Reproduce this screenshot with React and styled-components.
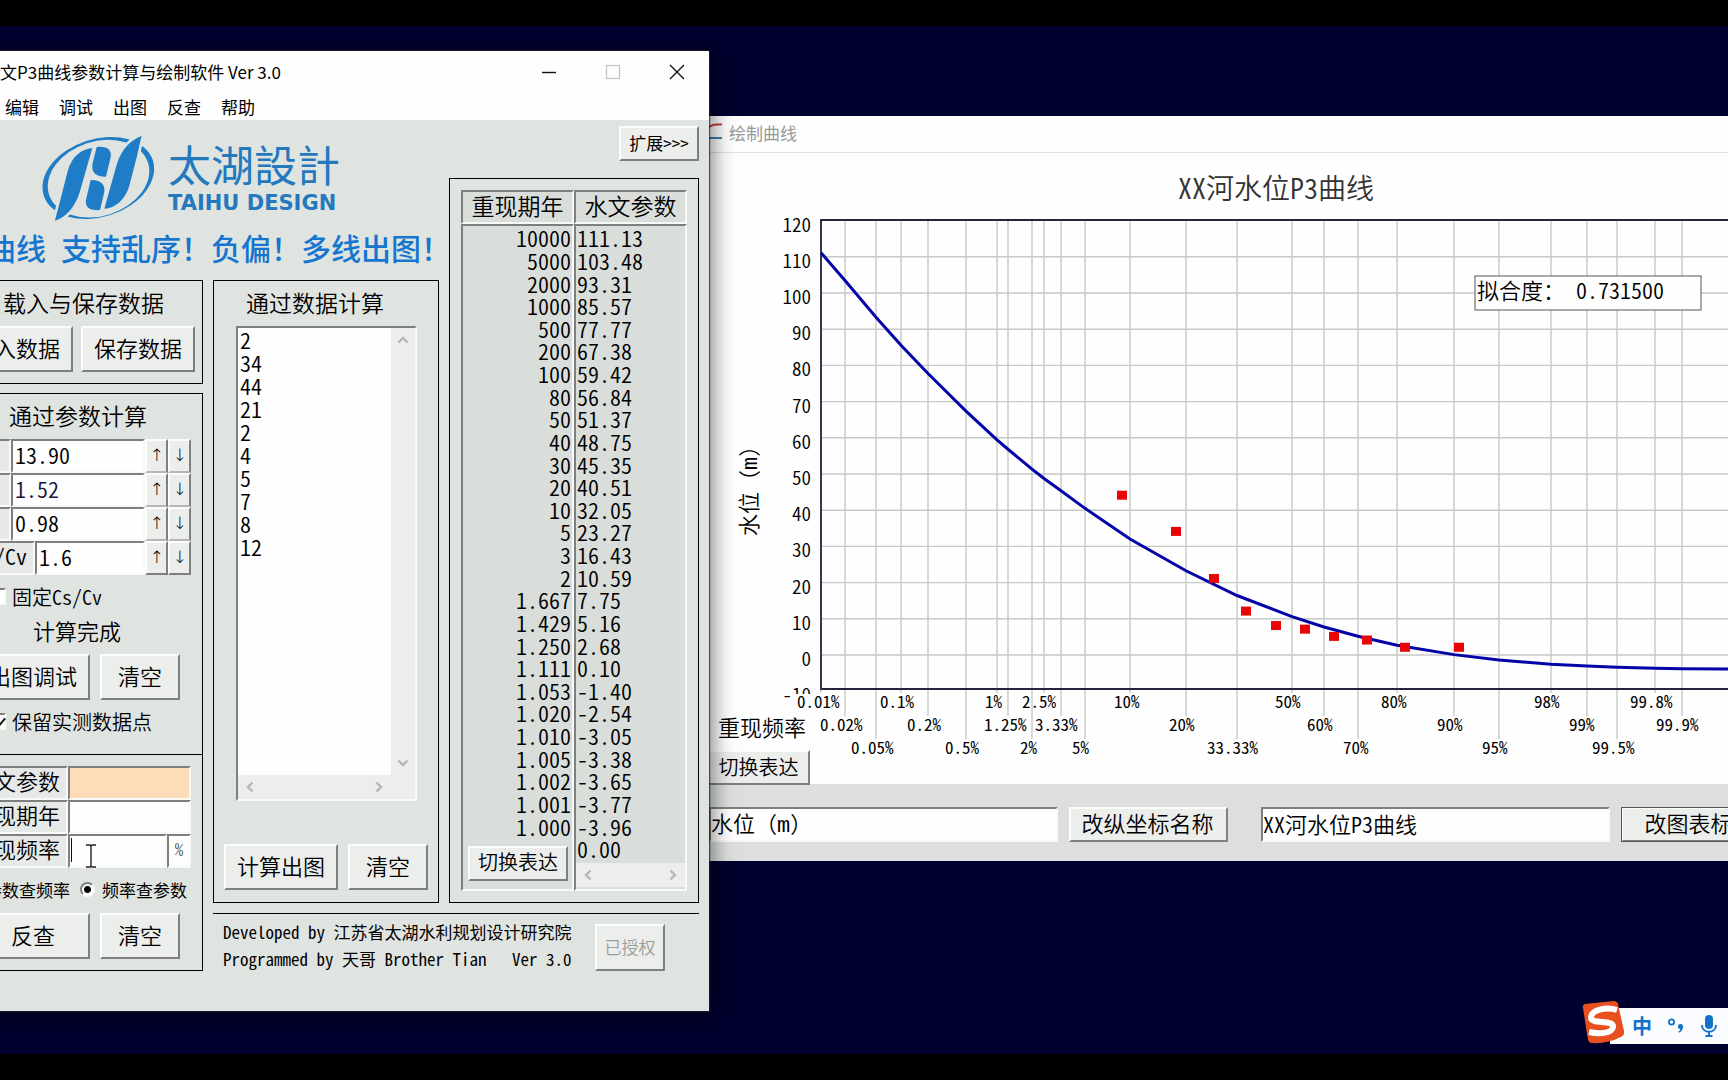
import React, { useState } from 'react';
import styled, { createGlobalStyle, css } from 'styled-components';

const returnPeriods = [
  ['10000', '111.13'], ['5000', '103.48'], ['2000', '93.31'], ['1000', '85.57'],
  ['500', '77.77'], ['200', '67.38'], ['100', '59.42'], ['80', '56.84'],
  ['50', '51.37'], ['40', '48.75'], ['30', '45.35'], ['20', '40.51'],
  ['10', '32.05'], ['5', '23.27'], ['3', '16.43'], ['2', '10.59'],
  ['1.667', '7.75'], ['1.429', '5.16'], ['1.250', '2.68'], ['1.111', '0.10'],
  ['1.053', '-1.40'], ['1.020', '-2.54'], ['1.010', '-3.05'], ['1.005', '-3.38'],
  ['1.002', '-3.65'], ['1.001', '-3.77'], ['1.000', '-3.96'],
];

// frequency label, x of the grid line, x of the label, label tier, curve value
const frequencies = [
  ['0.01%', 821, 797, 0, 111.13],
  ['0.02%', 845, 820, 1, 103.48],
  ['0.05%', 876, 851, 2, 93.31],
  ['0.1%', 901, 880, 0, 85.57],
  ['0.2%', 928, 907, 1, 77.77],
  ['0.5%', 966, 945, 2, 67.38],
  ['1%', 997, 985, 0, 59.42],
  ['1.25%', 1008, 984, 1, 56.84],
  ['2%', 1032, 1020, 2, 51.37],
  ['2.5%', 1044, 1022, 0, 48.75],
  ['3.33%', 1061, 1035, 1, 45.35],
  ['5%', 1085, 1072, 2, 40.51],
  ['10%', 1130, 1114, 0, 32.05],
  ['20%', 1186, 1169, 1, 23.27],
  ['33.33%', 1237, 1207, 2, 16.43],
  ['50%', 1292, 1275, 0, 10.59],
  ['60%', 1324, 1307, 1, 7.75],
  ['70%', 1358, 1343, 2, 5.16],
  ['80%', 1397, 1381, 0, 2.68],
  ['90%', 1454, 1437, 1, 0.1],
  ['95%', 1499, 1482, 2, -1.4],
  ['98%', 1551, 1534, 0, -2.54],
  ['99%', 1587, 1569, 1, -3.05],
  ['99.5%', 1617, 1592, 2, -3.38],
  ['99.8%', 1655, 1630, 0, -3.65],
  ['99.9%', 1682, 1656, 1, -3.77],
];

const measured = [
  [1122, 44], [1176, 34], [1214, 21], [1246, 12], [1276, 8],
  [1305, 7], [1334, 5], [1367, 4], [1405, 2], [1459, 2],
];

const yTicks = [120, 110, 100, 90, 80, 70, 60, 50, 40, 30, 20, 10, 0, -10];

const yOf = (value) => 655 - 3.62 * value;

const Chevron = ({ d }) => (
  <svg width="12" height="12" viewBox="0 0 12 12" fill="none" stroke="#b4b7b5" strokeWidth="2.4">
    <path d={d} />
  </svg>
);

const ScrollRow = () => (
  <HScroll>
    <Chevron d="M8.5 1.5 L4 6 L8.5 10.5" />
    <Chevron d="M3.5 1.5 L8 6 L3.5 10.5" />
  </HScroll>
);

const Logo = () => (
  <svg width="117" height="90" viewBox="120 280 351 270">
    <path
      fill="#1f7cc6"
      fillRule="evenodd"
      transform="rotate(-18 295 415)"
      d="M123 415 a172 117 0 1 0 344 0 a172 117 0 1 0 -344 0 Z M139 417 a156 112 0 1 0 312 0 a156 112 0 1 0 -312 0 Z"
    />
    <g fill="#1f7cc6" stroke="#e0e4e1" strokeWidth="16" paintOrder="stroke">
      <path d="M165 543 C168 530 175 505 180 485 L203 395 C215 350 245 328 277 325 L240 455 C225 505 195 535 165 543 Z" />
      <path d="M425 289 C421 302 417 325 412 345 L388 438 C375 482 345 505 313 507 L350 375 C365 325 395 300 425 289 Z" />
    </g>
    <g fill="#1f7cc6">
      <path d="M290 322 C320 318 336 330 332 352 L318 411 C290 412 274 400 277 375 Z" />
      <path d="M300 511 C270 514 254 502 258 480 L272 421 C300 420 316 432 313 457 Z" />
    </g>
  </svg>
);

const ParamRow = ({ label, wide, value, ink, last }) => {
  const [current, setCurrent] = useState(value);
  const step = (delta) => setCurrent((Number(current) + delta).toFixed(2));

  return (
    <Row>
      <CellLabel htmlFor={`param-${label}`} $edge={wide ? 84 : 60}>{wide ? label : ''}</CellLabel>
      <TextInput
        id={`param-${label}`}
        aria-label={label}
        value={current}
        $ink={ink}
        onChange={(e) => setCurrent(e.target.value)}
      />
      <Spin aria-label={`${label} +`} $last={last} onClick={() => step(0.01)}>↑</Spin>
      <Spin aria-label={`${label} -`} $last={last} onClick={() => step(-0.01)}>↓</Spin>
    </Row>
  );
};

const CurveChart = () => (
  <svg width="100%" viewBox="709 153 1079 631" preserveAspectRatio="xMinYMin meet">
    <g stroke="#c6c9c7" strokeWidth="1.4">
      {yTicks.slice(1, -1).map((t) => (
        <line key={t} x1="822" x2="1800" y1={yOf(t)} y2={yOf(t)} />
      ))}
      {frequencies.map(([label, x, , tier]) => (
        <line key={label} x1={x} x2={x} y1="221" y2={693 + tier * 23} />
      ))}
    </g>
    <path d="M1800 220 H821 V689 H1800" fill="none" stroke="#23253f" strokeWidth="1.8" />
    <polyline
      fill="none"
      stroke="#0404a8"
      strokeWidth="3"
      points={[...frequencies.map(([, x, , , v]) => `${x},${yOf(v)}`), `1790,${yOf(-3.96)}`].join(' ')}
    />
    {measured.map(([x, v]) => (
      <rect key={x} x={x - 5} y={yOf(v) - 5} width="10" height="9" fill="#ea0505" />
    ))}
    <ChartText $size={28} x="1178" y="199" fill="#333">XX河水位P3曲线</ChartText>
    {yTicks.map((t) => (
      <ChartText key={t} $size={19} x="811" y={yOf(t) + 11} textAnchor="end">{t}</ChartText>
    ))}
    <rect x="792" y="694" width="48" height="16" fill="#fdfefd" />
    {frequencies.map(([label, , x, tier]) => (
      <ChartText key={label} $size={17} $bold x={x} y={708 + tier * 23}>{label}</ChartText>
    ))}
    <ChartText $size={22} $fullWidth transform="translate(757 536) rotate(-90)">水位（m）</ChartText>
    <ChartText $size={22} x="718" y="736">重现频率</ChartText>
    <rect x="1475" y="276" width="226" height="34" fill="#fdfefd" stroke="#555" />
    <ChartText $size={22} x="1477" y="299">拟合度： 0.731500</ChartText>
  </svg>
);

const App = () => {
  const [samples, setSamples] = useState('2\n34\n44\n21\n2\n4\n5\n7\n8\n12');
  const [axisName, setAxisName] = useState('水位（m）');
  const [chartName, setChartName] = useState('XX河水位P3曲线');
  const [mode, setMode] = useState('frequency');

  return (
    <Screen>
      <GlobalStyle />
      <Desktop>
        <ChartWindow>
          <ChartTitleBar>
            <svg width="16" height="18" viewBox="0 0 16 18" fill="none" strokeWidth="2">
              <path d="M0 4 C3 2 5 1.500 8 1.500 H13" stroke="#cf3c3c" />
              <path d="M0 15 H13" stroke="#3b82ad" />
            </svg>
            绘制曲线
          </ChartTitleBar>
          <Plot>
            <CurveChart />
            <PlotToggle>切换表达</PlotToggle>
          </Plot>
          <NameBar>
            <NameInput $fullWidth aria-label="纵坐标名称" value={axisName} onChange={(e) => setAxisName(e.target.value)} />
            <NameButton>改纵坐标名称</NameButton>
            <NameInput $spaced aria-label="图表标题" value={chartName} onChange={(e) => setChartName(e.target.value)} />
            <NameButton $focused>改图表标题</NameButton>
          </NameBar>
        </ChartWindow>

        <MainWindow>
          <TitleBar>
            <Title>水文P3曲线参数计算与绘制软件 Ver 3.0</Title>
            <WindowButton aria-label="最小化">
              <svg width="16" height="16" viewBox="0 0 16 16" stroke="#111" strokeWidth="1.4"><path d="M1 8.500 H15" /></svg>
            </WindowButton>
            <WindowButton aria-label="最大化" disabled>
              <svg width="16" height="16" viewBox="0 0 16 16" fill="none" stroke="#c4c4c4" strokeWidth="1.2"><rect x="1.500" y="1.500" width="13" height="13" /></svg>
            </WindowButton>
            <WindowButton aria-label="关闭">
              <svg width="16" height="16" viewBox="0 0 16 16" stroke="#111" strokeWidth="1.4"><path d="M1 1 L15 15 M15 1 L1 15" /></svg>
            </WindowButton>
          </TitleBar>
          <MenuBar>
            {['编辑', '调试', '出图', '反查', '帮助'].map((item) => (
              <MenuItem key={item}>{item}</MenuItem>
            ))}
          </MenuBar>

          <Body>
            <Header>
              <Brand>
                <Logo />
                <BrandText>
                  <BrandName>太湖設計</BrandName>
                  <BrandLatin>TAIHU DESIGN</BrandLatin>
                </BrandText>
              </Brand>
              <Slogan>曲线 支持乱序！负偏！多线出图！</Slogan>
            </Header>

            <LeftColumn>
              <Panel>
                <PanelTitle $indent={52}>载入与保存数据</PanelTitle>
                <ButtonRow $gap={8} $end={7}>
                  <Button>载入数据</Button>
                  <Button>保存数据</Button>
                </ButtonRow>
              </Panel>

              <Panel $spaced>
                <PanelTitle $indent={58}>通过参数计算</PanelTitle>
                <ParamRow label="Ex" value="13.90" />
                <ParamRow label="Cv" value="1.52" ink="#14143c" />
                <ParamRow label="Cs" value="0.98" />
                <ParamRow label="Cs/Cv" value="1.6" wide last />
                <CheckLabel>
                  <Check type="checkbox" />
                  固定Cs/Cv
                </CheckLabel>
                <Status>计算完成</Status>
                <ButtonRow $gap={10} $end={22}>
                  <Button>出图调试</Button>
                  <Button $short>清空</Button>
                </ButtonRow>
                <CheckLabel>
                  <Check type="checkbox" defaultChecked />
                  保留实测数据点
                </CheckLabel>

                <Lookup>
                  <Row>
                    <CellLabel htmlFor="q-param" $edge={117}>水文参数</CellLabel>
                    <TextInput id="q-param" $fill="#fcdcb9" />
                  </Row>
                  <Row>
                    <CellLabel htmlFor="q-period" $edge={117}>重现期年</CellLabel>
                    <TextInput id="q-period" />
                  </Row>
                  <Row>
                    <CellLabel htmlFor="q-freq" $edge={117}>重现频率</CellLabel>
                    <TextInput id="q-freq" />
                    <Unit>%</Unit>
                    <Caret />
                    <Pointer width="12" height="24" viewBox="0 0 12 24" fill="none" stroke="#222" strokeWidth="1.4">
                      <path d="M1 1 H5 L6 2 L7 1 H11 M6 2 V22 M1 23 H5 L6 22 L7 23 H11" />
                    </Pointer>
                  </Row>
                </Lookup>
                <RadioRow>
                  <RadioLabel>
                    <Radio type="radio" name="mode" checked={mode === 'value'} onChange={() => setMode('value')} />
                    参数查频率
                  </RadioLabel>
                  <RadioLabel>
                    <Radio type="radio" name="mode" checked={mode === 'frequency'} onChange={() => setMode('frequency')} />
                    频率查参数
                  </RadioLabel>
                </RadioRow>
                <ButtonRow $gap={10} $end={22}>
                  <Button>反查</Button>
                  <Button $short>清空</Button>
                </ButtonRow>
              </Panel>
            </LeftColumn>

            <DataPanel>
              <PanelTitle $indent={32}>通过数据计算</PanelTitle>
              <Editor>
                <Samples
                  aria-label="通过数据计算"
                  spellCheck={false}
                  value={samples}
                  onChange={(e) => setSamples(e.target.value)}
                />
                <VScroll>
                  <Chevron d="M1.500 8.500 L6 4 L10.500 8.500" />
                  <Chevron d="M1.500 3.500 L6 8 L10.500 3.500" />
                </VScroll>
                <ScrollRow />
              </Editor>
              <ButtonRow $gap={10} $end={10}>
                <Button>计算出图</Button>
                <Button $short onClick={() => setSamples('')}>清空</Button>
              </ButtonRow>
            </DataPanel>

            <ResultColumn>
              <ExpandButton>扩展&gt;&gt;&gt;</ExpandButton>
              <ResultPanel>
                <Table>
                  <thead>
                    <tr>
                      <th>重现期年</th>
                      <th>水文参数</th>
                    </tr>
                  </thead>
                  <tbody>
                    {returnPeriods.map(([period, value]) => (
                      <tr key={period}>
                        <td>{period}</td>
                        <td>{value}</td>
                      </tr>
                    ))}
                  </tbody>
                  <tfoot>
                    <tr>
                      <td rowSpan={2}><ToggleButton>切换表达</ToggleButton></td>
                      <td>0.00</td>
                    </tr>
                    <tr>
                      <td><ScrollRow /></td>
                    </tr>
                  </tfoot>
                </Table>
              </ResultPanel>
            </ResultColumn>

            <Footer>
              <Credits>
                <p>Developed by 江苏省太湖水利规划设计研究院</p>
                <p>Programmed by 天哥 Brother Tian   Ver 3.0</p>
              </Credits>
              <LicenseButton disabled>已授权</LicenseButton>
            </Footer>
          </Body>
        </MainWindow>

        <ImeBar>
          <ImeLogo width="46" height="46" viewBox="0 0 46 46">
            <path d="M3 8 Q2 5 5 4 L34 1 Q37 1 38 4 L44 31 Q45 35 41 37 Q27 44 12 43 Q9 43 8 40 Z" fill="#e9501f" />
            <path d="M37 10 C27 7 12 9 11 17 C10 25 34 19 33 27 C32 34 18 34 9 32" fill="none" stroke="#fff" strokeWidth="6" />
          </ImeLogo>
          <span>中</span>
          <svg width="18" height="20" viewBox="0 0 18 20">
            <circle cx="4.500" cy="6" r="2.600" fill="none" stroke="#1372c8" strokeWidth="1.800" />
            <path d="M13.500 8 a2.500 2.500 0 0 1 2.500 2.700 c0 3 -1.500 5 -4 6 l-0.600 -1.200 c1.300 -0.700 2 -1.500 2 -2.500 a2.500 2.500 0 0 1 0.100 -5 Z" fill="#1372c8" />
          </svg>
          <svg width="18" height="24" viewBox="0 0 18 24">
            <rect x="5" y="1" width="8" height="14" rx="4" fill="#1372c8" />
            <path d="M2 11 C2 20 16 20 16 11 M9 18 V21 M5.500 22 H12.500" fill="none" stroke="#1372c8" strokeWidth="2" />
          </svg>
        </ImeBar>
      </Desktop>
    </Screen>
  );
};

export default App;

const GlobalStyle = createGlobalStyle`
  * {
    box-sizing: border-box;
  }
  body {
    margin: 0;
    background: #000;
    overflow: hidden;
  }
  body, button, input, textarea {
    color: #000;
    font-family: "Noto Sans CJK SC", sans-serif;
    font-weight: 350;
    font-feature-settings: "hwid";
  }
  svg {
    display: block;
    flex: none;
  }
`;

const raised = css`
  border: 2px solid;
  border-color: #fbfdfb #7d807e #7d807e #fbfdfb;
  background: #eceeec;
`;

const sunken = css`
  border: 2px solid;
  border-color: #7d807e #f8faf8 #f8faf8 #7d807e;
`;

const Screen = styled.div`
  display: flex;
  height: 100vh;
  padding: 26px 0;
  background: #000;
`;

const Desktop = styled.main`
  position: relative;
  flex: 1;
  overflow: hidden;
  background: #00002f;
`;

const MainWindow = styled.section`
  position: absolute;
  top: 25px;
  left: -60px;
  width: 769px;
  background: #e0e4e1;
  box-shadow: 0 0 1px 1px rgba(30, 32, 40, 0.7), 4px 4px 20px rgba(0, 0, 0, 0.5);
`;

const TitleBar = styled.header`
  display: flex;
  align-items: center;
  height: 42px;
  padding-left: 43px;
  background: #fdfefd;
`;

const Title = styled.h1`
  flex: 1;
  margin: 0;
  padding-bottom: 2px;
  font-size: 17px;
  font-weight: 400;
  font-feature-settings: normal;
`;

const WindowButton = styled.button`
  display: flex;
  align-items: center;
  justify-content: center;
  width: 64px;
  height: 42px;
  padding: 0;
  border: 0;
  background: none;
`;

const MenuBar = styled.nav`
  display: flex;
  gap: 20px;
  height: 27px;
  padding-left: 65px;
  background: #fdfefd;
`;

const MenuItem = styled.button`
  padding: 0;
  border: 0;
  background: none;
  font-size: 17px;
  line-height: 24px;
  font-weight: 400;
`;

const Body = styled.div`
  display: grid;
  grid-template-columns: 263px 226px 250px;
  grid-template-rows: 160px 623px auto;
  column-gap: 10px;
  padding: 0 10px 40px 0;
`;

const Header = styled.div`
  grid-column: 1 / 3;
  grid-row: 1;
  padding-top: 13px;
`;

const Brand = styled.div`
  display: flex;
  gap: 11px;
  padding-left: 100px;
`;

const BrandText = styled.div`
  color: #2479bd;
`;

const BrandName = styled.div`
  font-family: "Noto Sans CJK TC", sans-serif;
  font-size: 43px;
  line-height: 60px;
  font-weight: 400;
`;

const BrandLatin = styled.div`
  font-family: "DejaVu Sans", sans-serif;
  font-size: 21px;
  line-height: 20px;
  font-weight: 700;
`;

const Slogan = styled.div`
  padding-left: 46px;
  color: #1575cf;
  font-size: 30px;
  line-height: 48px;
  font-weight: 500;
  white-space: nowrap;
`;

const LeftColumn = styled.div`
  grid-column: 1;
  grid-row: 2 / 4;
  padding-left: 10px;
`;

const Panel = styled.section`
  margin-top: ${(props) => (props.$spaced ? '9px' : '0')};
  padding-bottom: 11px;
  border: 1px solid #000;
`;

const PanelTitle = styled.h2`
  margin: 0;
  padding-left: ${(props) => props.$indent}px;
  padding-bottom: 3px;
  font-size: 23px;
  line-height: 42px;
  font-weight: 350;
`;

const ButtonRow = styled.div`
  display: flex;
  justify-content: flex-end;
  gap: ${(props) => props.$gap}px;
  padding-right: ${(props) => props.$end}px;
`;

const Button = styled.button`
  ${raised}
  width: ${(props) => (props.$short ? '80px' : '114px')};
  height: 46px;
  padding: 0 0 4px;
  font-size: 22px;
  line-height: 30px;
  white-space: nowrap;
`;

const Row = styled.div`
  position: relative;
  display: flex;
  height: 34px;
  margin-right: 11px;
`;

const CellLabel = styled.label`
  ${sunken}
  width: ${(props) => props.$edge}px;
  padding-right: 6px;
  background: #e6e9e7;
  font-size: 22px;
  line-height: 24px;
  text-align: right;
  white-space: nowrap;
`;

const TextInput = styled.input`
  ${sunken}
  flex: 1;
  min-width: 0;
  padding: 0 2px 4px;
  border-radius: 0;
  background: ${(props) => props.$fill || '#fdfefd'};
  color: ${(props) => props.$ink || '#000'};
  font-size: 22px;
`;

const Spin = styled.button`
  ${raised}
  width: 23px;
  padding: 0 0 3px;
  border-bottom-color: ${(props) => (props.$last ? '#7d807e' : '#b4b7b5')};
  font-family: "DejaVu Sans", sans-serif;
  font-size: 17px;
  line-height: 24px;
`;

const CheckLabel = styled.label`
  display: flex;
  align-items: center;
  gap: 6px;
  height: 45px;
  padding: 0 0 2px 38px;
  font-size: 20px;
`;

const Check = styled.input`
  ${sunken}
  position: relative;
  width: 17px;
  height: 17px;
  margin: 0;
  appearance: none;
  background: #fff;
  &:checked::after {
    content: '';
    position: absolute;
    left: 4px;
    top: 0;
    width: 6px;
    height: 10px;
    border: solid #111;
    border-width: 0 2px 2px 0;
    transform: rotate(40deg);
  }
`;

const Status = styled.p`
  margin: 0;
  padding-left: 82px;
  padding-bottom: 14px;
  font-size: 22px;
  line-height: 20px;
`;

const Lookup = styled.div`
  margin-top: 9px;
  margin-bottom: 7px;
  padding-top: 11px;
  border-top: 1px solid #000;
`;

const Unit = styled.span`
  ${sunken}
  width: 24px;
  background: #fdfefd;
  color: #555;
  font-size: 17px;
  line-height: 26px;
  text-align: center;
`;

const Caret = styled.span`
  position: absolute;
  left: 120px;
  top: 4px;
  width: 1px;
  height: 24px;
  background: #111;
`;

const Pointer = styled.svg`
  position: absolute;
  left: 134px;
  top: 10px;
`;

const RadioRow = styled.div`
  display: flex;
  justify-content: flex-end;
  gap: 10px;
  height: 38px;
  padding-right: 15px;
`;

const RadioLabel = styled.label`
  display: flex;
  align-items: center;
  gap: 7px;
  height: 28px;
  font-size: 17px;
  font-weight: 400;
  white-space: nowrap;
`;

const Radio = styled.input`
  width: 15px;
  height: 15px;
  margin: 0;
  border: 2px solid;
  border-color: #7d807e #f8faf8 #f8faf8 #7d807e;
  border-radius: 50%;
  appearance: none;
  background: #fff;
  &:checked {
    background: radial-gradient(circle, #000 3px, #fff 4px);
  }
`;

const DataPanel = styled.section`
  grid-column: 2;
  grid-row: 2;
  border: 1px solid #000;
`;

const Editor = styled.div`
  ${sunken}
  display: grid;
  grid-template-columns: 1fr 24px;
  grid-template-rows: 1fr 24px;
  height: 475px;
  margin: 0 21px 43px 22px;
  background: #eceeec;
`;

const Samples = styled.textarea`
  padding: 0 2px;
  border: 0;
  background: #fdfefd;
  font-size: 22px;
  line-height: 23px;
  overflow: hidden;
  resize: none;
  outline: 0;
`;

const VScroll = styled.div`
  display: flex;
  flex-direction: column;
  justify-content: space-between;
  align-items: center;
  padding: 6px 0;
`;

const HScroll = styled.div`
  display: flex;
  align-items: center;
  justify-content: space-between;
  height: 24px;
  padding: 0 6px;
  background: #eceeec;
`;

const ResultColumn = styled.div`
  grid-column: 3;
  grid-row: 1 / 3;
  display: flex;
  flex-direction: column;
  align-items: flex-end;
  gap: 17px;
  padding-top: 6px;
`;

const ExpandButton = styled.button`
  ${raised}
  width: 80px;
  height: 35px;
  padding: 0 0 2px;
  font-size: 17px;
  font-weight: 400;
`;

const ResultPanel = styled.section`
  align-self: stretch;
  flex: 1;
  padding: 11px;
  border: 1px solid #000;
`;

const Table = styled.table`
  width: 100%;
  height: 701px;
  border-spacing: 0;
  table-layout: fixed;
  background: #dadedb;
  font-size: 22px;
  line-height: 22px;
  th {
    ${sunken}
    height: 34px;
    padding: 0 0 4px;
    font-size: 23px;
    font-weight: 350;
  }
  td {
    padding: 0 1px;
    border: 0 solid;
    border-color: #7d807e #f8faf8 #f8faf8 #7d807e;
    border-left-width: 2px;
    border-right-width: 2px;
  }
  td:first-child:not(:only-child) {
    text-align: right;
  }
  tbody tr:first-child td {
    border-top-width: 2px;
  }
  tfoot td {
    height: 26px;
    vertical-align: top;
  }
  tfoot td[rowspan] {
    padding-right: 4px;
    border-bottom-width: 2px;
    line-height: 0;
    vertical-align: middle;
  }
  tfoot tr:last-child td {
    height: 28px;
    padding: 0;
    border-bottom-width: 2px;
  }
`;

const ToggleButton = styled.button`
  ${raised}
  width: 100px;
  height: 35px;
  padding: 0 0 3px;
  font-size: 20px;
  line-height: 24px;
`;

const Footer = styled.footer`
  grid-column: 2 / 4;
  grid-row: 3;
  display: flex;
  justify-content: space-between;
  height: 58px;
  margin-top: 10px;
  padding: 10px 34px 0 10px;
  border-top: 1px solid #000;
`;

const Credits = styled.div`
  margin-top: -6px;
  font-size: 17px;
  line-height: 27px;
  font-weight: 400;
  white-space: pre;
  p {
    margin: 0;
  }
`;

const LicenseButton = styled.button`
  ${raised}
  width: 70px;
  height: 47px;
  padding: 0 0 2px;
  font-size: 17px;
  &:disabled {
    color: #9a9d9b;
  }
`;

const ChartWindow = styled.section`
  position: absolute;
  top: 90px;
  left: 709px;
  right: -60px;
  background: #fdfefd;
`;

const ChartTitleBar = styled.header`
  display: flex;
  align-items: center;
  gap: 4px;
  height: 37px;
  padding-bottom: 4px;
  border-bottom: 1px solid #dfe1df;
  color: #999;
  font-size: 17px;
  font-weight: 400;
`;

const Plot = styled.div`
  position: relative;
`;

const ChartText = styled.text`
  font-size: ${(props) => props.$size}px;
  font-weight: ${(props) => (props.$bold ? 400 : 350)};
  ${(props) => props.$fullWidth && css`
    font-family: "Liberation Mono", "Noto Sans CJK SC", monospace;
    font-feature-settings: normal;
  `}
`;

const PlotToggle = styled.button`
  ${raised}
  position: absolute;
  left: -4px;
  bottom: -1px;
  width: 105px;
  height: 35px;
  padding: 0 0 2px 2px;
  font-size: 20px;
  line-height: 24px;
`;

const NameBar = styled.div`
  display: flex;
  align-items: center;
  gap: 11px;
  height: 77px;
  padding: 4px 8px 0 0;
  background: #dcdfdd;
`;

const NameInput = styled(TextInput)`
  height: 35px;
  margin-left: ${(props) => (props.$spaced ? '22px' : '0')};
  padding-left: 0;
  ${(props) => props.$fullWidth && css`
    font-family: "Liberation Mono", "Noto Sans CJK SC", monospace;
    font-feature-settings: normal;
  `}
`;

const NameButton = styled.button`
  ${raised}
  width: 159px;
  height: 35px;
  padding: 0 2px 4px 0;
  outline: ${(props) => (props.$focused ? '1px solid #555' : '0')};
  outline-offset: -1px;
  font-size: 22px;
  line-height: 27px;
`;

const ImeBar = styled.aside`
  position: absolute;
  right: 0;
  bottom: 10px;
  display: flex;
  align-items: center;
  gap: 15px;
  height: 36px;
  padding: 0 10px 0 52px;
  background: linear-gradient(90deg, transparent 30px, #fbfcff 30px);
  color: #1372c8;
  font-size: 20px;
  line-height: 32px;
  font-weight: 700;
`;

const ImeLogo = styled.svg`
  position: absolute;
  left: 0;
  bottom: -2px;
`;
